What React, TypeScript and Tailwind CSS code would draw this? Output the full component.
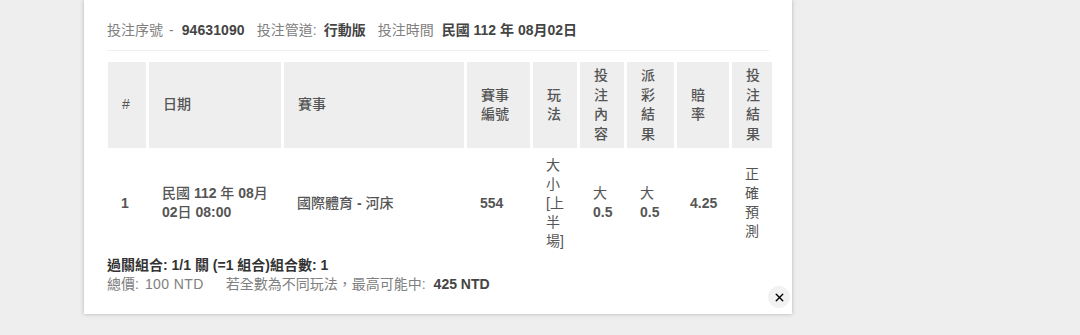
import type { ReactNode } from "react";
import { X } from "lucide-react";

const cols = "grid-cols-[38px_132px_180px_63px_44px_44px_47px_52px_40px]";

const headers: string[][] = [
  ["#"],
  ["日期"],
  ["賽事"],
  ["賽事", "編號"],
  ["玩", "法"],
  ["投", "注", "內", "容"],
  ["派", "彩", "結", "果"],
  ["賠", "率"],
  ["投", "注", "結", "果"],
];

const B = ({ children }: { children: ReactNode }) => <b className="font-bold">{children}</b>;

const row: ReactNode[][] = [
  [<B>1</B>],
  [
    <span className="font-medium">民國 <B>112</B> 年 <B>08</B>月</span>,
    <span className="font-medium"><B>02</B>日 <B>08:00</B></span>,
  ],
  [<span className="font-medium">國際體育 <B>-</B> 河床</span>],
  [<B>554</B>],
  ["大", "小", "[上", "半", "場]"],
  ["大", <B>0.5</B>],
  ["大", <B>0.5</B>],
  [<B>4.25</B>],
  ["正", "確", "預", "測"],
];

export default function App() {
  return (
    <div
      className="w-[1080px] h-[335px] bg-[#eeeeee] overflow-hidden"
      style={{ fontFamily: '"Liberation Sans", "Noto Sans CJK TC", sans-serif' }}
    >
      <div className="ml-[84px] w-[708px] h-[314px] bg-white relative shadow-[0_0_4px_rgba(0,0,0,0.25)] px-[23px]">
        {/* bet summary line */}
        <div className="pt-[20px] pb-[10px] text-[14px] leading-[20px] text-[#808080] border-b border-[#eeeeee] flex">
          <span>投注序號</span>
          <span className="ml-[6px]">-</span>
          <span className="font-bold text-[#444] ml-[8px] tracking-[0.1px]">94631090</span>
          <span className="ml-[12px]">投注管道:</span>
          <span className="font-bold text-[#444] ml-[7px]">行動版</span>
          <span className="ml-[12px]">投注時間</span>
          <span className="font-bold text-[#444] ml-[8px]">民國 112 年 08月02日</span>
        </div>

        {/* table */}
        <div className={`grid ${cols} gap-x-[3px] mt-[11px] ml-px text-[14px]`}>
          {headers.map((lines, i) => (
            <div
              key={i}
              className="bg-[#eeeeee] h-[86px] flex flex-col justify-center pl-[14px] text-[#555] font-medium leading-[19.5px]"
            >
              {lines.map((l, j) => (
                <span key={j} className="whitespace-nowrap">{l}</span>
              ))}
            </div>
          ))}
          {row.map((lines, i) => (
            <div
              key={i}
              className="h-[104px] mt-[3px] flex flex-col justify-center pl-[13px] text-[#555] font-normal leading-[19px]"
            >
              {lines.map((l, j) => (
                <span key={j} className="whitespace-nowrap">{l}</span>
              ))}
            </div>
          ))}
        </div>

        {/* footer */}
        <div className="mt-[1px] text-[14px] leading-[19px]">
          <div className="font-bold text-[#333]">過關組合: 1/1 關 (=1 組合)組合數: 1</div>
          <div className="text-[#808080]">
            <span>總價:</span>
            <span className="ml-[6px] tracking-[0.4px]">100 NTD</span>
            <span className="ml-[22px]">若全數為不同玩法，最高可能中:</span>
            <span className="font-bold text-[#444] ml-[8px]">425 NTD</span>
          </div>
        </div>

        <button className="absolute right-[2px] bottom-[6px] w-[22px] h-[22px] rounded-full bg-[#f2f2f2] flex items-center justify-center text-black">
          <X className="w-[13px] h-[13px]" strokeWidth={2.5} />
        </button>
      </div>
    </div>
  );
}
